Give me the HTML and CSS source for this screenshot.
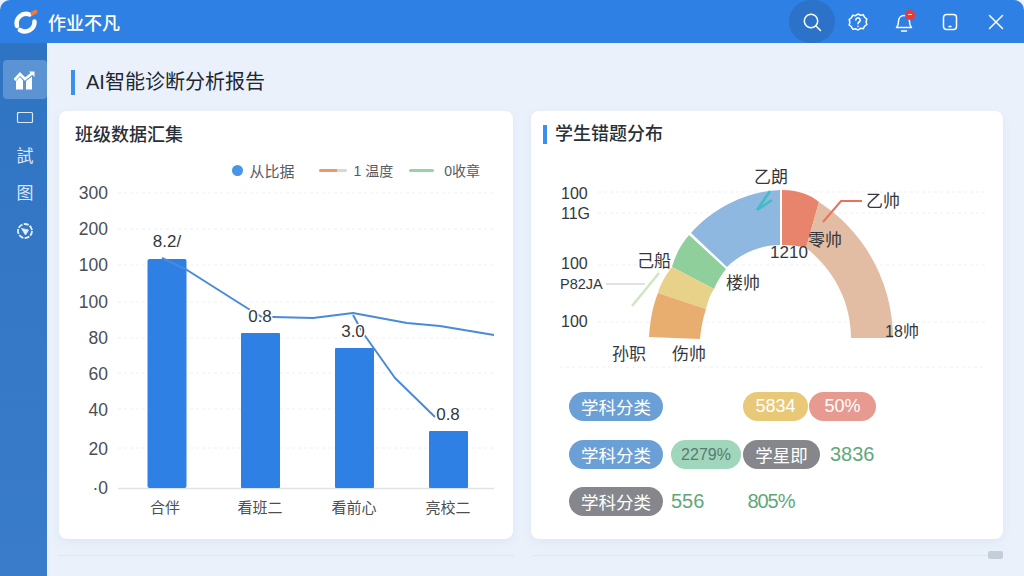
FILE: index.html
```html
<!DOCTYPE html>
<html lang="zh-CN">
<head>
    <meta charset="UTF-8">
    <meta name="viewport" content="width=device-width, initial-scale=1.0">
    <title>作业不凡</title>
    <link rel="stylesheet" href="styles.css">
</head>
<body>
    <div class="app">
        <header class="topbar">
            <div class="brand">
                <svg class="brand-logo" width="26" height="26" viewBox="0 0 26 26" fill="none" stroke-linecap="round">
                    <path d="M17.500 5.500A9.500 9.500 0 0 0 5 17" stroke="#fff" stroke-width="4.500"/>
                    <path d="M22.500 12.500A9.500 9.500 0 0 1 8 21" stroke="#fff" stroke-width="4.500"/>
                    <path d="M20.500 4.500L23.500 2.800" stroke="#f0793f" stroke-width="4"/>
                </svg>
                <span class="brand-name">作业不凡</span>
            </div>
            <div class="top-actions">
                <button class="top-btn top-btn-active">
                    <svg width="22" height="22" viewBox="0 0 22 22" fill="none" stroke="#fff" stroke-width="1.500" stroke-linecap="round"><circle cx="10" cy="10" r="6.700"/><path d="M15 15l4.500 4.500"/></svg>
                </button>
                <button class="top-btn">
                    <svg width="22" height="22" viewBox="0 0 22 22" fill="none" stroke="#fff" stroke-width="1.500" stroke-linecap="round"><path d="M11 3l2.500 1.200 2.800-.4 1.300 2.500 2.200 1.700-.7 2.800.7 2.700-2.200 1.700-1.300 2.500-2.800-.4L11 19l-2.500-1.200-2.800.4-1.300-2.500-2.200-1.700.7-2.700-.7-2.800 2.200-1.700 1.300-2.500 2.800.4Z"/><path d="M8.800 9a2.200 2.200 0 1 1 3.300 2c-.8.500-1.100 1-1.100 1.800"/><path d="M11 15.300v.2"/></svg>
                </button>
                <button class="top-btn">
                    <span class="bell">
                        <svg width="22" height="24" viewBox="0 0 22 24" fill="none" stroke="#fff" stroke-width="1.500" stroke-linecap="round" stroke-linejoin="round"><path d="M3.500 17.500c1.500-1.500 2-3 2-6 0-3.500 2.300-6 5.500-6s5.500 2.500 5.500 6c0 3 .5 4.500 2 6Z"/><path d="M8.500 21h5"/></svg>
                        <span class="bell-dot"></span>
                    </span>
                </button>
                <button class="top-btn">
                    <svg width="22" height="22" viewBox="0 0 22 22" fill="none" stroke="#fff" stroke-width="1.500" stroke-linecap="round"><rect x="4.500" y="3.500" width="13" height="15" rx="3"/><path d="M10 15.500h2"/></svg>
                </button>
                <button class="top-btn">
                    <svg width="22" height="22" viewBox="0 0 22 22" fill="none" stroke="#fff" stroke-width="1.500" stroke-linecap="round"><path d="M4.500 4.500l13 13M17.500 4.500l-13 13"/></svg>
                </button>
            </div>
        </header>
        <div class="body-row">
            <nav class="sidebar">
                <a class="nav-item nav-item-active">
                    <svg width="22" height="20" viewBox="0 0 22 20"><path d="M0.500 10L6 4l5 5 7-5.500" fill="none" stroke="#fff" stroke-width="2.600"/><path d="M15 1.500h5.500V7Z" fill="#fff"/><path d="M2 11l4-4 3 3.500v9H2ZM12 11l6-4.500v13h-6Z" fill="#fff"/></svg>
                </a>
                <a class="nav-item">
                    <svg width="18" height="16" viewBox="0 0 18 16" fill="none" stroke="#dbe8f8" stroke-width="1.200"><path d="M2.500 2.500h13c.6 0 1 .4 1 1v8c0 .6-.4 1-1 1h-13c-.6 0-1-.4-1-1v-8c0-.6.4-1 1-1Z"/><path d="M1.500 3.500l1-1.500"/></svg>
                </a>
                <a class="nav-item nav-text">試</a>
                <a class="nav-item nav-text">图</a>
                <a class="nav-item nav-item-gear">
                    <svg width="18" height="18" viewBox="0 0 18 18" fill="none" stroke="#e6effa" stroke-width="1.800"><circle cx="9" cy="9" r="7" stroke-dasharray="5 1.300"/><path d="M5.500 6.500l7 1.500-3 5Z" fill="#e6effa" stroke-width="0.800"/></svg>
                </a>
            </nav>
            <main class="content">
                <h1 class="page-title">AI智能诊断分析报告</h1>
                <div class="cards">
                    <section class="card">
                        <h2 class="card-title">班级数据汇集</h2>
                        <div class="legend">
                            <span class="legend-item legend-item-first"><i class="legend-dot"></i>从比据</span>
                            <span class="legend-item"><i class="legend-line legend-line-orange"></i>1 温度</span>
                            <span class="legend-item legend-item-last"><i class="legend-line legend-line-green"></i>0收章</span>
                        </div>
                        <svg class="chart" viewBox="59 180 454 345" width="454" height="345">
                            <g class="grid">
                                <path d="M118 193H494M118 229H494M118 265H494M118 302H494M118 338H494M118 373H494M118 409H494M118 448H494"/>
                            </g>
                            <path d="M118 488.500H494" stroke="#dfe3e8" stroke-width="1.500"/>
                            <g class="y-label">
                                <text x="108" y="199">300</text>
                                <text x="108" y="235">200</text>
                                <text x="108" y="271">100</text>
                                <text x="108" y="308">100</text>
                                <text x="108" y="344">80</text>
                                <text x="108" y="380">60</text>
                                <text x="108" y="416">40</text>
                                <text x="108" y="455">20</text>
                                <text x="108" y="494">·0</text>
                            </g>
                            <g fill="#2f80e4">
                                <rect x="147.500" y="259" width="39" height="229" rx="2"/>
                                <rect x="241" y="333" width="39" height="155" rx="1"/>
                                <rect x="335" y="348" width="39" height="140" rx="1"/>
                                <rect x="429" y="431" width="39" height="57" rx="1"/>
                            </g>
                            <g fill="none" stroke="#4a8ad8" stroke-width="2" stroke-linejoin="round">
                                <path d="M162 258L187 270 247 308 262 317 273 317 313 318 353 313 407 323 440 326 494 335"/>
                                <path d="M353 315L363 333 395 378 435 417"/>
                            </g>
                            <g class="bar-value">
                                <text x="167" y="247">8.2/</text>
                                <text x="260" y="322">0.8</text>
                                <text x="353" y="337">3.0</text>
                                <text x="448" y="420">0.8</text>
                            </g>
                            <g class="x-label">
                                <text x="165" y="513">合伴</text>
                                <text x="260" y="513">看班二</text>
                                <text x="354" y="513">看前心</text>
                                <text x="448" y="513">亮校二</text>
                            </g>
                        </svg>
                    </section>
                    <section class="card">
                        <h2 class="card-title card-title-bar">学生错题分布</h2>
                        <svg class="gauge" viewBox="531 160 472 210" width="472" height="210">
                            <g class="grid">
                                <path d="M598 192H985M598 213H985M598 265H985M598 322H985M560 367H985"/>
                            </g>
                            <path d="M782 190C800 190 812 196 819 202L806 248C800 246 790 245 782 245Z" fill="#e8846c"/>
                            <path d="M819 202C866 232 893 285 893 338H851C851 300 832 268 806 248Z" fill="#e2bda3"/>
                            <path d="M780 190C748 191 714 207 691 233L727 267C740 254 760 245 780 245Z" fill="#8fb8e0"/>
                            <path d="M689 235C680 246 675 256 672 267L714 289C717 282 721 275 726 269Z" fill="#8fcf9b"/>
                            <path d="M672 267C665 276 660 285 658 293L706 309C708 301 710 295 714 289Z" fill="#e8d28a"/>
                            <path d="M658 293C652 308 650 322 649 337L700 339C701 328 703 318 706 309Z" fill="#e8ae70"/>
                            <path d="M770 191L757 210 772 200" stroke="#40bcc4" stroke-width="2.500" fill="none"/>
                            <path d="M862 201H841L823 222" stroke="#e8735c" stroke-width="2" fill="none"/>
                            <path d="M606 284H645" stroke="#d4d8dc" stroke-width="1.500" fill="none"/>
                            <path d="M659 273L632 306" stroke="#cfe6c0" stroke-width="2.500" fill="none"/>
                            <g class="y-label y-label-left">
                                <text x="561" y="199">100</text>
                                <text x="561" y="219">11G</text>
                                <text x="561" y="269">100</text>
                                <text class="y-label-small" x="560" y="289">P82JA</text>
                                <text x="561" y="327">100</text>
                            </g>
                            <g class="gauge-label">
                                <text x="771" y="183">乙朗</text>
                                <text x="883" y="207">乙帅</text>
                                <text x="825" y="246">零帅</text>
                                <text x="789" y="258">1210</text>
                                <text x="743" y="289">楼帅</text>
                                <text x="654" y="267">己船</text>
                                <text x="629" y="360">孙职</text>
                                <text x="689" y="360">伤帅</text>
                                <text class="gauge-label-small" x="902" y="337">18帅</text>
                            </g>
                        </svg>
                        <div class="tag-rows">
                            <div class="tag-row">
                                <span class="tag tag-blue">学科分类</span>
                                <span class="tag tag-yellow">5834</span>
                                <span class="tag tag-red">50%</span>
                            </div>
                            <div class="tag-row">
                                <span class="tag tag-blue">学科分类</span>
                                <span class="tag tag-green">2279%</span>
                                <span class="tag tag-gray tag-short">学星即</span>
                                <span class="num num-after-short">3836</span>
                            </div>
                            <div class="tag-row tag-row-last">
                                <span class="tag tag-gray">学科分类</span>
                                <span class="num num-first">556</span>
                                <span class="num num-second">805%</span>
                            </div>
                        </div>
                    </section>
                </div>
                <div class="footer-lines">
                    <div class="footer-line"></div>
                    <div class="footer-line"><span class="handle"></span></div>
                </div>
            </main>
        </div>
    </div>
</body>
</html>
```
FILE: styles.css
```css
* {
    box-sizing: border-box;
}

body {
    margin: 0;
    width: 1024px;
    height: 576px;
    overflow: hidden;
    background-color: #eaf1fb;
    font-family: "Liberation Sans", "Noto Sans CJK SC", sans-serif;
}

.app {
    height: 576px;
    display: flex;
    flex-direction: column;
}

.topbar {
    height: 43px;
    flex-shrink: 0;
    background-color: #2f80e4;
    border-radius: 10px 10px 0 0;
    display: flex;
    align-items: center;
    justify-content: space-between;
    padding: 0 5px 0 12px;
}

.brand {
    display: flex;
    align-items: center;
    gap: 10px;
}

.brand-name {
    color: #fff;
    font-size: 18px;
    font-weight: 500;
}

.top-actions {
    display: flex;
    align-items: center;
}

.top-btn {
    width: 46px;
    height: 43px;
    padding: 0;
    background: none;
    border: none;
    display: flex;
    align-items: center;
    justify-content: center;
}

.top-btn-active {
    background-color: #2b72c8;
    border-radius: 22px;
}

.bell {
    position: relative;
    display: flex;
}

.bell-dot {
    position: absolute;
    top: 0;
    right: 0;
    width: 10px;
    height: 10px;
    border-radius: 50%;
    background-color: #ee3a32;
}

.bell-dot::after {
    content: "";
    position: absolute;
    top: 4px;
    left: 3px;
    width: 4px;
    height: 1.500px;
    background-color: #fbd0cc;
}

.body-row {
    flex: 1;
    display: flex;
    min-height: 0;
}

.sidebar {
    width: 47px;
    flex-shrink: 0;
    background: linear-gradient(180deg, #2f74c2, #3a7cca);
    padding: 17px 0 0 3px;
    display: flex;
    flex-direction: column;
    align-items: flex-start;
}

.nav-item {
    width: 44px;
    height: 37px;
    display: flex;
    align-items: center;
    justify-content: center;
    color: #dbe8f8;
    font-size: 17px;
}

.nav-item-active {
    height: 39px;
    background-color: #5b93d3;
    border-radius: 4px;
}

.nav-item-gear {
    margin-top: 2px;
}

.content {
    flex: 1;
    min-width: 0;
    padding: 27px 21px 0 12px;
    display: flex;
    flex-direction: column;
}

.page-title {
    margin: 0 0 16px 12px;
    height: 25px;
    padding-left: 11px;
    border-left: 4px solid #3b90ee;
    font-size: 20px;
    line-height: 25px;
    font-weight: 400;
    color: #1d2733;
}

.cards {
    display: grid;
    grid-template-columns: 454px 472px;
    column-gap: 18px;
}

.card {
    height: 428px;
    background-color: #fff;
    border-radius: 8px;
    box-shadow: 0 3px 10px rgba(120, 150, 190, 0.10);
    overflow: hidden;
}

.card-title {
    margin: 14px 0 0 16px;
    font-size: 18px;
    line-height: 20px;
    font-weight: 500;
    color: #2a3038;
}

.card-title-bar {
    margin-left: 12px;
    padding-left: 8px;
    border-left: 4px solid #3b90ee;
    height: 19px;
    line-height: 19px;
}

.legend {
    display: flex;
    justify-content: flex-end;
    align-items: center;
    margin: 17px 33px 0 0;
    height: 16px;
    font-size: 14px;
    color: #555c64;
}

.legend-item {
    display: flex;
    align-items: center;
    gap: 7px;
    margin-left: 16px;
}

.legend-item-first {
    font-size: 15px;
}

.legend-item-last {
    gap: 10px;
}

.legend-item:nth-child(2) {
    margin-left: 24px;
}

.legend-dot {
    width: 11px;
    height: 11px;
    border-radius: 50%;
    background-color: #4a94e4;
}

.legend-line {
    width: 28px;
    height: 3px;
    border-radius: 2px;
}

.legend-line-orange {
    background: linear-gradient(90deg, #ee9670 65%, #d8d8d4 65%);
}

.legend-line-green {
    width: 25px;
    background-color: #93d6a4;
}

.chart {
    display: block;
    margin-top: 2px;
}

.gauge {
    display: block;
    margin-top: 16px;
}

.grid path {
    stroke: #eef0f3;
    stroke-width: 1;
    stroke-dasharray: 3 3;
    fill: none;
}

.y-label text {
    font-size: 17.500px;
    fill: #4a4f55;
    text-anchor: end;
}

.y-label-left text {
    text-anchor: start;
    font-size: 16px;
    fill: #33383e;
}

.y-label-left .y-label-small {
    font-size: 14.500px;
}

.bar-value text {
    font-size: 17px;
    fill: #33383e;
    text-anchor: middle;
    paint-order: stroke;
    stroke: #fff;
    stroke-width: 3px;
}

.gauge-label text {
    font-size: 17px;
    fill: #33383e;
    text-anchor: middle;
}

.gauge-label .gauge-label-small {
    font-size: 16px;
}

.x-label text {
    font-size: 15px;
    fill: #4a4f55;
    text-anchor: middle;
}

.tag-rows {
    margin: 22px 0 0 38px;
    display: flex;
    flex-direction: column;
    gap: 19px;
}

.tag-row {
    display: flex;
    align-items: center;
    height: 29px;
}

.tag-row-last {
    margin-top: -1px;
}

.tag {
    width: 94px;
    height: 29px;
    border-radius: 15px;
    display: flex;
    align-items: center;
    justify-content: center;
    color: #fff;
    font-size: 17.500px;
}

.tag-blue {
    background-color: #6ba0d6;
}

.tag-gray {
    background-color: #85878c;
}

.tag-yellow {
    width: 65px;
    margin-left: 80px;
    background-color: #e9c878;
    font-size: 18px;
}

.tag-red {
    width: 67px;
    margin-left: 1px;
    background-color: #e69a90;
    font-size: 18px;
}

.tag-green {
    width: 70px;
    margin-left: 8px;
    background-color: #a0d6bc;
    color: #5b7a70;
    font-size: 16px;
}

.tag-short {
    width: 77px;
    margin-left: 2px;
}

.num {
    font-size: 20px;
    color: #5fa87a;
}

.num-after-short {
    margin-left: 10px;
}

.num-first {
    margin-left: 8px;
}

.num-second {
    margin-left: 43px;
    letter-spacing: -1px;
}

.footer-lines {
    display: grid;
    grid-template-columns: 455px 470px;
    column-gap: 19px;
    margin-top: 16px;
}

.footer-line {
    height: 1px;
    background-color: #dde6f1;
    position: relative;
}

.handle {
    position: absolute;
    right: 0;
    top: -4px;
    width: 15px;
    height: 8px;
    background-color: #c4ced9;
    border-radius: 2px;
}
```
